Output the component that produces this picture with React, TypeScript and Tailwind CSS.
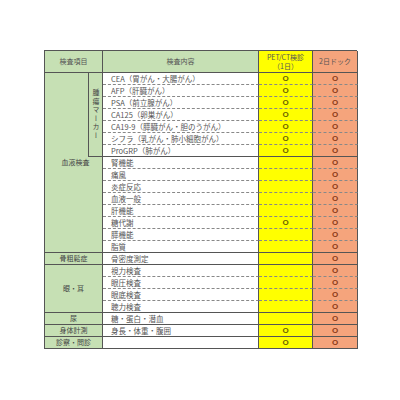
import React from 'react'

type Row = { t: string; pet: boolean; solid: boolean }

const rows: Row[] = [
  { t: 'CEA（胃がん・大腸がん）', pet: true, solid: false },
  { t: 'AFP（肝臓がん）', pet: true, solid: false },
  { t: 'PSA（前立腺がん）', pet: true, solid: false },
  { t: 'CA125（卵巣がん）', pet: true, solid: false },
  { t: 'CA19-9（膵臓がん・胆のうがん）', pet: true, solid: false },
  { t: 'シフラ（乳がん・肺小細胞がん）', pet: true, solid: false },
  { t: 'ProGRP（肺がん）', pet: true, solid: true },
  { t: '腎機能', pet: false, solid: false },
  { t: '痛風', pet: false, solid: false },
  { t: '炎症反応', pet: false, solid: false },
  { t: '血液一般', pet: false, solid: false },
  { t: '肝機能', pet: false, solid: false },
  { t: '糖代謝', pet: true, solid: false },
  { t: '膵機能', pet: false, solid: false },
  { t: '脂質', pet: false, solid: true },
  { t: '骨密度測定', pet: false, solid: true },
  { t: '視力検査', pet: false, solid: false },
  { t: '眼圧検査', pet: false, solid: false },
  { t: '眼底検査', pet: false, solid: false },
  { t: '聴力検査', pet: false, solid: true },
  { t: '糖・蛋白・潜血', pet: false, solid: true },
  { t: '身長・体重・腹囲', pet: true, solid: true },
  { t: '', pet: true, solid: true },
]

const rowStart = [
  'row-start-2', 'row-start-3', 'row-start-4', 'row-start-5', 'row-start-6', 'row-start-7',
  'row-start-8', 'row-start-9', 'row-start-10', 'row-start-11', 'row-start-12', 'row-start-13',
  'row-start-14', 'row-start-15', 'row-start-16', 'row-start-17', 'row-start-18', 'row-start-19',
  'row-start-20', 'row-start-21', 'row-start-22', 'row-start-23', 'row-start-24',
]

const cell = 'border-r border-b border-[#555] flex items-center'
const green = 'bg-[#c6e0b4]'
const mark = "justify-center font-bold text-[8px] font-['Liberation_Sans',sans-serif]"

export default function App() {
  return (
    <div className="w-[400px] h-[400px] bg-white pt-[50px] pl-[44px] font-['Noto_Sans_CJK_JP','Liberation_Sans',sans-serif] text-[7px] leading-none text-[#555]">
      <div className="grid grid-cols-[43px_15px_156px_54px_45px] grid-rows-[22px_repeat(23,12px)] w-[313px] border-t border-l border-[#555]">
        {/* header */}
        <div className={`${cell} ${green} col-start-1 col-span-2 row-start-1 justify-center`}>検査項目</div>
        <div className={`${cell} ${green} col-start-3 row-start-1 justify-center`}>検査内容</div>
        <div className={`${cell} bg-[#ffff00] col-start-4 row-start-1 flex-col justify-center gap-[2px] text-center`}>
          <span>PET/CT検診</span>
          <span>（1日）</span>
        </div>
        <div className={`${cell} bg-[#f5a47c] col-start-5 row-start-1 justify-center`}>2日ドック</div>

        {/* groups */}
        <div className={`${cell} ${green} col-start-1 col-span-2 row-start-2 row-span-15 justify-center pl-[4px] text-[#444]`}>血液検査</div>
        <div className={`${cell} ${green} col-start-2 row-start-2 row-span-7 border-l justify-center text-[#444]`}>
          <span className="[writing-mode:vertical-rl] tracking-[1.5px]">腫瘍マーカー</span>
        </div>
        <div className={`${cell} ${green} col-start-1 col-span-2 row-start-17 justify-center text-[#444]`}>骨粗鬆症</div>
        <div className={`${cell} ${green} col-start-1 col-span-2 row-start-18 row-span-4 justify-center text-[#444]`}>眼・耳</div>
        <div className={`${cell} ${green} col-start-1 col-span-2 row-start-22 justify-center text-[#444]`}>尿</div>
        <div className={`${cell} ${green} col-start-1 col-span-2 row-start-23 justify-center text-[#444]`}>身体計測</div>
        <div className={`${cell} ${green} col-start-1 col-span-2 row-start-24 justify-center text-[#444]`}>診察・問診</div>

        {/* rows */}
        {rows.map((r, i) => {
          const b = r.solid ? '' : '[border-bottom-style:dashed] border-b-[#888]'
          return (
            <React.Fragment key={i}>
              <div className={`${cell} ${b} ${rowStart[i]} col-start-3 pl-2 text-[7.5px] whitespace-nowrap`}>{r.t}</div>
              <div className={`${cell} ${b} ${rowStart[i]} col-start-4 bg-[#ffff00] ${mark} text-[#6b6200]`}>
                {r.pet ? 'O' : ''}
              </div>
              <div className={`${cell} ${b} ${rowStart[i]} col-start-5 bg-[#f5a47c] ${mark} text-[#8c3b17]`}>O</div>
            </React.Fragment>
          )
        })}
      </div>
    </div>
  )
}
